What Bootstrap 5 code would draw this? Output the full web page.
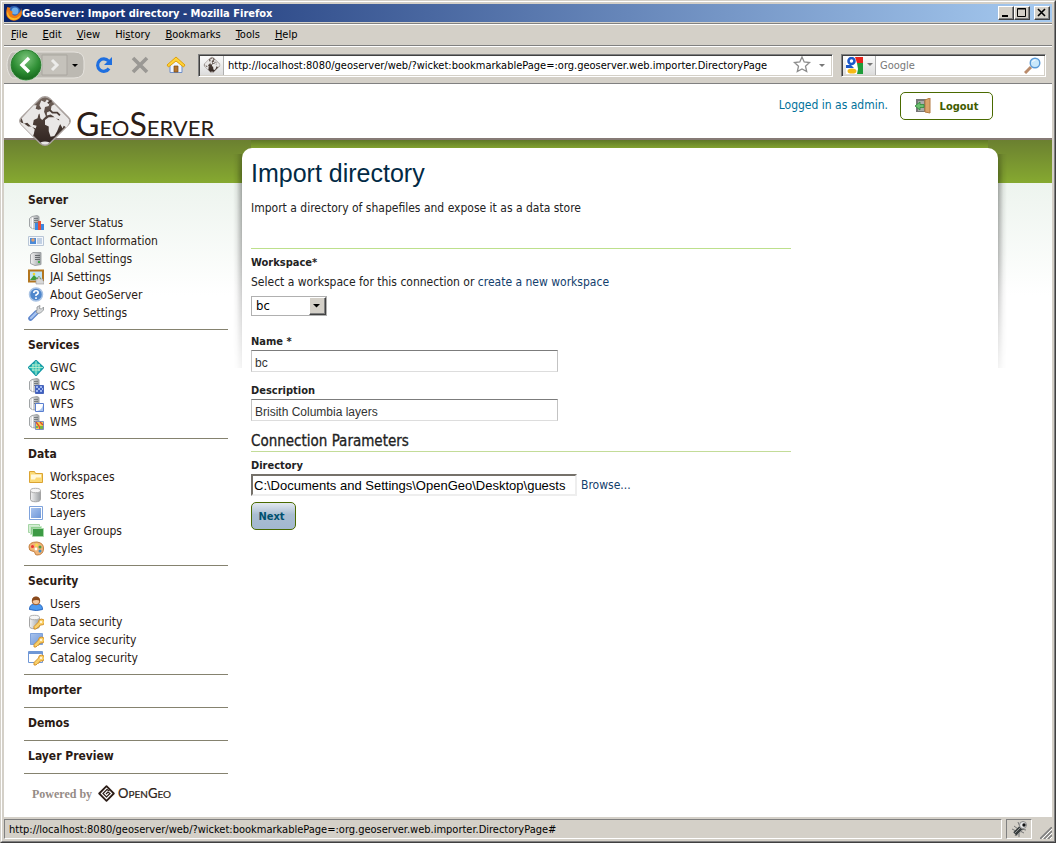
<!DOCTYPE html>
<html lang="en">
<head>
<meta charset="utf-8">
<meta name="viewport" content="width=device-width, initial-scale=1">
<title>GeoServer: Import directory</title>
<link rel="stylesheet" href="https://cdn.jsdelivr.net/npm/bootstrap@5.3.0/dist/css/bootstrap.min.css">
<style>
:root{--face:#d4d0c8;--ui:"DejaVu Sans Condensed","DejaVu Sans",sans-serif}
body{font:12px/18px var(--ui);color:#222;background:var(--face)}
a{text-decoration:none}
.win{border:1px solid;border-color:#d4d0c8 #404040 #404040 #d4d0c8}
.win-inner{border:1px solid;border-color:#fff #808080 #808080 #fff;padding:2px 2px 1px 2px}
.titlebar{height:18px;background:linear-gradient(90deg,#0a246a,#a6caf0);color:#fff;font-weight:bold;font-size:11px;padding:0 2px}
.winbtn{width:16px;height:14px;background:var(--face);border:1px solid;border-color:#fff #404040 #404040 #fff;box-shadow:inset -1px -1px #808080}
.groove{border-bottom:1px solid #808080;box-shadow:0 1px #fff}
.title-rule{padding-top:1px}
.menus{height:22px;font-size:11px;gap:15px;padding:1px 7px 0}
.menus a,.menus a:hover{color:#000}
.toolbar{height:37px;margin-top:1px;padding:0 6px 0 2px;border-bottom:1px solid #808080}
.tool{width:36px;height:30px}
.inset{height:23px;background:#fff;border:1px solid;border-color:#808080 #fff #fff #808080;box-shadow:inset 1px 1px #404040,inset -1px -1px #d4d0c8}
.inset input{font-size:11px;outline:0;min-width:0;height:21px}
.inset .cap{height:19px;margin:1px 0 0 1px;background:linear-gradient(#fbfbfb,#dcdcdc);border-right:1px solid #b0b0b0}
.inset .cap.engine{width:33px}
.inset .cap.favicon{width:24px}
.search{width:205px}
.search input::placeholder{color:#777}
.site{background:#fff}
.site-head{height:54px;padding:0 59px 0 13px}
.brandmark{position:relative;z-index:1;color:#2c1d17}
.wordmark{font:400 22px/32px Lato,sans-serif;color:#2c1d17;margin-left:3px}
.wordmark b{font-size:32px;font-weight:400}
.who{color:#00719a}
.logout{height:28px;width:93px;border:1px solid #4a6a00;border-radius:5px;background:#fff;color:#3f5c00;font:bold 11px var(--ui)}
.site-main{border-top:2px solid #867a75;background:linear-gradient(#6b8030,#86a930) 0 0/100% 43px no-repeat,linear-gradient(#edf4ee,#fff) 0 43px/100% 112px no-repeat}
.side{width:238px;padding:45px 14px 0 20px;color:#2a1a14}
.side section{border-bottom:1px solid #85826f;padding:5px 4px 7px}
.side h2{font-size:12px;line-height:20px;font-weight:bold;margin:0}
.side ul{padding-top:4px}
.side a,.side a:hover{color:#2a1a14;height:18px;gap:6px}
.powered{font:bold 12px/20px "Liberation Serif",serif;color:#958b86;padding:9px 8px 0}
.powered svg{margin:0 3px 0 6px}
.powered .og{font:400 10px/20px Lato,sans-serif;color:#2c1d17;-webkit-text-stroke:.2px}
.powered .og b{font-size:13px;font-weight:400}
.panel{position:relative;background:#fff;border-radius:10px 10px 0 0;margin:8px 54px 0 0;padding:10px 9px}
.panel::before{content:"";position:absolute;top:6px;left:-9px;right:-9px;height:214px;pointer-events:none;background:linear-gradient(270deg,#0005,#0001 60%,#0000) 0 0/9px 100% no-repeat,linear-gradient(90deg,#0005,#0001 60%,#0000) 100% 0/9px 100% no-repeat;-webkit-mask:linear-gradient(#0008,#000 20px,#000c 100px,#0002);mask:linear-gradient(#0008,#000 20px,#000c 100px,#0002)}
.panel::after{content:"";position:absolute;top:-8px;left:9px;right:10px;height:8px;background:linear-gradient(#5f7727,#82a22f)}
.panel h1{font:25px/30px "Liberation Sans",sans-serif;color:#022a45;margin:0 0 11px}
.form-area{max-width:540px;margin-top:31px}
.form-area.top-rule{border-top:1px solid #bde08c;padding-top:4px}
.form-area label{font-size:11px;line-height:16px;padding-top:2px;font-weight:bold;display:block}
.form-area a{color:#12406c}
.pick{width:76px;height:20px;margin:6px 0 16px}
.pick select{appearance:none;border:1px solid #b0b0b0;background:#fff;padding:0 4px;font-size:13px;color:#000;border-radius:0}
.pick span{position:absolute;right:1px;top:1px;pointer-events:none;width:17px;height:18px;background:var(--face);border:1px solid;border-color:#fff #404040 #404040 #fff;box-shadow:inset -1px -1px #808080}
.field{width:307px;height:22px;border:1px solid;border-color:#7c7c7c #c3c3c3 #ddd #c3c3c3;padding:4px 3px 0;font:12px "Liberation Sans",sans-serif;color:#333}
.field.spaced{margin-bottom:9px}
.form-area h3{font-size:15px;line-height:19px;font-weight:500;-webkit-text-stroke:.3px;margin:11px 0 4px;border-bottom:1px solid #c3dc98;color:#222}
.dir{width:326px;height:22px;border:2px solid;border-color:#75716a #eee #eee #75716a;padding:0 1px;font:13px "Liberation Sans",sans-serif;color:#000}
.next{width:45px;height:28px;margin-top:6px;border:1px solid #4a6a00;border-radius:5px;background:linear-gradient(#e2e8f0,#a9bdd1 45%,#a3b8cf);color:#00506f;font:bold 11px var(--ui);padding:0 4px 0 0}
.statusbar{height:23px;padding:2px 0 1px;font-size:11px;color:#000}
.cell{border:1px solid;border-color:#808080 #fff #fff #808080;height:20px}
.bug{width:26px}
</style>
</head>
<body>
<svg width="0" height="0" class="position-absolute" aria-hidden="true">
<defs>
<linearGradient id="gs" x1="0" x2="1"><stop offset="0" stop-color="#f4f4f4"/><stop offset="1" stop-color="#9b9fa2"/></linearGradient>
<linearGradient id="gb" x1="0" x2="1" y2="1"><stop offset="0" stop-color="#a9c4ee"/><stop offset="1" stop-color="#6d96d8"/></linearGradient>
<linearGradient id="gd" x1="0" y1="0" x2="0" y2="1"><stop offset="0" stop-color="#75675f"/><stop offset=".5" stop-color="#4a3c36"/><stop offset="1" stop-color="#2f231f"/></linearGradient>
<radialGradient id="gg" cx=".5" cy=".3" r=".7"><stop offset="0" stop-color="#7cc47c"/><stop offset=".6" stop-color="#2f8f35"/><stop offset="1" stop-color="#14641a"/></radialGradient>
<symbol id="srv" viewBox="0 0 16 16"><path d="M1.500 3.500 4 1.500l5-1 2 1v11l-4 1.500-3-.5-2.500-2z" fill="url(#gs)" stroke="#a0a4a6"/><path d="M6 3.500h4M6 5.500h4M6 7.500h4" stroke="#777d80"/><path d="M4.500 2.500v11" stroke="#fff"/></symbol>
<symbol id="key" viewBox="0 0 16 16"><path d="M6 12.500 10.500 8a3 3 0 1 1 2.500 3l-1.500.5-.5 1.500-1.500.5L8 15H6z" fill="#f8cf6a" stroke="#d08a20" stroke-width=".9"/><circle cx="13" cy="8" r="1" fill="#fff"/></symbol>
<symbol id="cyl" viewBox="0 0 16 16"><path d="M2.500 3.500v9c0 3 10 3 10 0v-9" fill="url(#gs)" stroke="#a4a4a4"/><ellipse cx="7.500" cy="3.500" rx="5" ry="2.200" fill="#f6f6f6" stroke="#b0b0b0"/></symbol>
<symbol id="globe" viewBox="0 0 60 60"><path d="M30 4q3 0 5 2l20 20q4 4 0 8L35 54q-5 4-10 0L5 34q-4-4 0-8L25 6q2-2 5-2z" fill="url(#gd)" stroke="#aaa29e" stroke-width="1.500"/><g fill="#e9e7e6"><path d="M5 27 18 13l3 0-1 4 3 1 4-1 0 3-4 3-1 4-4 2-1 5 4 1-1 3-5-2-4-4-4 1z"/><path d="m3 31 5 2 4 3 4 0 3 3-1 5-1 2L5 34z"/><path d="m26 8 4 2 2-3 3 2-1 5-4 1-1 5 2 5-4 4-2-2-1-6 2-4-2-4z"/><path d="m30 29 4-3 7 0 3 3 4 1-3 6-2 5-3 5-4 1-2-6 0-5-4-2z"/><path d="m32 21 4-2 1-5 3-2 2 2 5 5 8 8q2 2 1 5l-3 5-3-2-1 3-3-5-1-5-4-1-2-2-3-2-4 1z"/><path d="M25 53q5-2 10 0-5 5-10 0z"/></g><path d="m35 18 3 3 5 0 3 3M33 11l4-3" stroke="#4a3c36" stroke-width="2" fill="none"/></symbol>
</defs>
</svg>

<div class="win min-vh-100 d-flex flex-column">
<div class="win-inner flex-grow-1 d-flex flex-column">
 <div class="titlebar d-flex align-items-center">
  <svg width="16" height="16" viewBox="0 0 16 16"><circle cx="8" cy="8" r="7" fill="#2f62b5"/><circle cx="9" cy="6" r="3.500" fill="#72b0e8"/><path d="M1 3q-2 7 1 10 4 4 9 2 5-2 5-8l-1-4q0 4-2 5-3 4-6 2-2-2 0-3L3.500 5l1-2-3-1z" fill="#f07a13"/><path d="M2 6q0 6 5 7 5 1 8-4-2 6-8 6-5-1-6-6z" fill="#fbc02a"/></svg>
  <span class="flex-grow-1 lh-1 ms-0">GeoServer: Import directory - Mozilla Firefox</span>
  <button class="winbtn p-0 d-flex" aria-label="Minimize"><svg width="14" height="12"><path d="M3 8h6v2H3z"/></svg></button>
  <button class="winbtn p-0 d-flex" aria-label="Maximize"><svg width="14" height="12"><path d="M2.500 2v7.500h8V1.500h-8M2 2h9" fill="none" stroke="#000"/></svg></button>
  <button class="winbtn p-0 d-flex ms-1" aria-label="Close"><svg width="14" height="12"><path d="m3 2 7 7m0-7-7 7" stroke="#000" stroke-width="1.600"/></svg></button>
 </div>
 <div class="groove title-rule"></div>
 <nav class="menus groove d-flex align-items-center" aria-label="Menu bar">
  <a href="#"><u>F</u>ile</a><a href="#"><u>E</u>dit</a><a href="#"><u>V</u>iew</a><a href="#">Hi<u>s</u>tory</a><a href="#"><u>B</u>ookmarks</a><a href="#"><u>T</u>ools</a><a href="#"><u>H</u>elp</a>
 </nav>
 <div class="toolbar d-flex align-items-center">
  <svg width="80" height="34" viewBox="0 0 80 34" role="img" aria-label="Back and forward"><path d="M6 4h62q10 0 10 9v8q0 9-10 9H6q-5-5-5-13T6 4z" fill="#bcb9b2" stroke="#e6e3de"/><path d="M36 7h25v20H36z" fill="#c5c2bb" stroke="#a9a69f"/><path d="m46 12 5 5-5 5" fill="none" stroke="#ececea" stroke-width="3"/><circle cx="20" cy="17" r="15.500" fill="url(#gg)" stroke="#dff0df"/><circle cx="20" cy="17" r="15" fill="none" stroke="#2c7d30"/><path d="m23 10-7 7 7 7" fill="none" stroke="#fff" stroke-width="3.500"/><path d="M66 16h6l-3 3z"/></svg>
  <button class="tool btn p-0 border-0 d-flex align-items-center justify-content-center" aria-label="Reload"><svg width="18" height="18" viewBox="0 0 18 18"><path d="M14 12.500A6.200 6.200 0 1 1 13.500 5" fill="none" stroke="#1f6fe0" stroke-width="3.200"/><path d="M17 1v8H9z" fill="#1f6fe0"/></svg></button>
  <button class="tool btn p-0 border-0 d-flex align-items-center justify-content-center" aria-label="Stop"><svg width="18" height="18"><path d="m2 2 14 14M16 2 2 16" stroke="#9a9894" stroke-width="3.600"/></svg></button>
  <button class="tool btn p-0 border-0 d-flex align-items-center justify-content-center" aria-label="Home"><svg width="20" height="18" viewBox="0 0 20 18"><path d="M4 9v7.500h12V9l-6-5z" fill="#eef4ff" stroke="#6f8fc8"/><path d="M8 10h4v6H8z" fill="#b5742b" stroke="#7c4a12" stroke-width=".7"/><path d="m10 1 9 8-1.500 2L10 5l-7.500 6L1 9z" fill="#ffd338" stroke="#e0a00c"/></svg></button>
  <div class="inset d-flex flex-grow-1 ms-1 me-2 align-items-start">
   <span class="cap favicon d-flex align-items-center justify-content-center"><svg width="18" height="18"><use href="#globe"/></svg></span>
   <input class="border-0 flex-grow-1 bg-transparent p-0 ps-1" type="text" aria-label="Address" value="http://localhost:8080/geoserver/web/?wicket:bookmarkablePage=:org.geoserver.web.importer.DirectoryPage">
   <svg class="me-1 align-self-center" width="37" height="18" viewBox="0 0 37 18"><path d="m11 1 2.200 5 5.300.6-4 3.600 1.200 5.300L11 13l-4.700 2.500 1.200-5.300-4-3.600L8.800 6z" fill="#fff" stroke="#8d8d8d" stroke-width="1.300"/><path d="M28 8h6l-3 3z" fill="#777"/></svg>
  </div>
  <div class="inset search d-flex align-items-start">
   <span class="cap engine d-flex align-items-center justify-content-center gap-1"><svg width="17" height="17" viewBox="0 0 17 17"><path d="M0 0h17v17H0z" fill="#fff"/><path d="M9 0h8v6h-6z" fill="#e8231c"/><path d="M11 6h6v11h-6l1-5z" fill="#1f9c3a"/><circle cx="5.500" cy="4" r="3" fill="#fff" stroke="#1c58c8" stroke-width="2.600"/><path d="M0 8h5l3 3H0z" fill="#1c58c8"/><ellipse cx="6" cy="14" rx="4.500" ry="2.600" fill="#f5b916"/></svg><svg width="6" height="4"><path d="M0 0h6L3 3z" fill="#777"/></svg></span>
   <input class="border-0 flex-grow-1 bg-transparent p-0 ps-1" type="search" aria-label="Search" placeholder="Google">
   <svg class="me-1 align-self-center" width="17" height="17" viewBox="0 0 17 17"><path d="m1 16 6-6" stroke="#b98a6a" stroke-width="3"/><circle cx="11" cy="6" r="4.800" fill="#c9e8fb" stroke="#5b9bd8" stroke-width="1.400"/><path d="M8.500 5a3 3 0 0 1 3-2" stroke="#fff" fill="none"/></svg>
  </div>
 </div>

 <div class="site flex-grow-1 d-flex flex-column">
  <header class="site-head d-flex">
   <a class="brandmark d-flex align-items-start" href="#"><svg class="mt-2 flex-shrink-0" width="56" height="58" viewBox="0 0 60 60"><use href="#globe"/></svg><span class="wordmark mt-4"><b>G</b>EO<b>S</b>ERVER</span></a>
   <div class="ms-auto d-flex align-items-start gap-2 pt-1">
    <span class="who me-1 mt-2">Logged in as admin.</span>
    <button class="logout d-flex align-items-center justify-content-center gap-2 p-0 my-1"><svg width="17" height="16" viewBox="0 0 17 16"><path d="M1 1h10v13H1z" fill="#777"/><path d="M3 3h6v10H3z" fill="#aaa"/><path d="m10 2 5-2v15l-5-1z" fill="#d9a36a" stroke="#b37b43"/><path d="m0 8 5-4v2.500h4v3H5V12z" fill="#6cc070" stroke="#2f8a3a" stroke-width=".8"/></svg>Logout</button>
   </div>
  </header>
  <div class="site-main flex-grow-1 d-flex align-items-start">
   <nav class="side flex-shrink-0" aria-label="Site">
    <section><h2>Server</h2><ul class="list-unstyled mb-0">
     <li><a class="d-flex align-items-center" href="#"><svg width="16" height="16"><use href="#srv"/><path d="M7 8h3v7H7z" fill="#3f87e0"/><path d="M10 6h3v9h-3z" fill="#e8503a"/><path d="M13 9h3v6h-3z" fill="#3f87e0"/></svg>Server Status</a></li>
     <li><a class="d-flex align-items-center" href="#"><svg width="16" height="16"><path d="M.5 3.500h15v9H.5z" fill="#f4f8fc" stroke="#b9c6d6"/><path d="M2 5h6v6H2z" fill="#4a8ad8"/><circle cx="5" cy="7" r="1.700" fill="#e0a070"/><path d="M9 6h5M9 8h5M9 10h5" stroke="#8fa9cc"/></svg>Contact Information</a></li>
     <li><a class="d-flex align-items-center" href="#"><svg width="16" height="16"><path d="M2.500 3.500 5 1.500h8v12l-6 1-4.500-2z" fill="url(#gs)" stroke="#a0a4a6"/><path d="M7 4.500h5M7 6.500h5M7 8.500h5" stroke="#666b6e"/><path d="M10 10h2v2h-2z" fill="#3fae49"/></svg>Global Settings</a></li>
     <li><a class="d-flex align-items-center" href="#"><svg width="16" height="16"><path d="M1 1.500h14v11H1z" fill="#bfe3f6" stroke="#b3761f" stroke-width="2"/><path d="m2 11 4-5 3 3 2-2 3 4z" fill="#3e9e3a"/><circle cx="6" cy="5" r="1.300" fill="#f5d530"/><path d="M8 10h2V8h2v2h3v2h1v3H8z" fill="#d8d8d8" stroke="#999" stroke-width=".6"/></svg>JAI Settings</a></li>
     <li><a class="d-flex align-items-center" href="#"><svg width="16" height="16"><circle cx="8" cy="7.500" r="6.500" fill="#4f87cc" stroke="#a9c3e4" stroke-width="1.500"/><path d="M5.800 6q0-2.200 2.200-2.200T10.200 6Q10 7 8 8v1M8 10.200V12" fill="none" stroke="#fff" stroke-width="1.600"/></svg>About GeoServer</a></li>
     <li><a class="d-flex align-items-center" href="#"><svg width="16" height="16"><path d="m2.500 13.500 6-6" stroke="#5d86cc" stroke-width="4.600" stroke-linecap="round"/><path d="m3 13 5-5" stroke="#a7c3ef" stroke-width="2.400" stroke-linecap="round"/><path d="m8 7 1-2 0-3 3-1.500-.5 3 2 .5 2-2V5l-3 3-2.500.5z" fill="#d6d8da" stroke="#8b8f92" stroke-width=".8"/></svg>Proxy Settings</a></li>
    </ul></section>
    <section><h2>Services</h2><ul class="list-unstyled mb-0">
     <li><a class="d-flex align-items-center" href="#"><svg width="16" height="16"><path d="m8 .5 7.500 7L8 15.500.5 7.500z" fill="#35c1b8" stroke="#159aa6" stroke-width="1.500" stroke-linejoin="round"/><path d="M8 1v14M1 7.500h14M5 4v7M11 4v7M4 5h8M4 10h8" stroke="#c7f2d0" stroke-width=".8"/></svg>GWC</a></li>
     <li><a class="d-flex align-items-center" href="#"><svg width="16" height="16"><use href="#srv"/><path d="M7.500 7.500h8v8h-8z" fill="#3f60c0" stroke="#4a66bb"/><path d="M8 8h2v2H8zM12 8h2v2h-2zM10 10h2v2h-2zM14 10h1v2h-1zM8 12h2v2H8zM12 12h2v2h-2z" fill="#9eb6ef"/></svg>WCS</a></li>
     <li><a class="d-flex align-items-center" href="#"><svg width="16" height="16"><use href="#srv"/><path d="M7.500 7.500h8v8h-8z" fill="#fff" stroke="#5a7fd0"/><path d="M9 15q5-1 6-6v6z" fill="#a9c4ee"/></svg>WFS</a></li>
     <li><a class="d-flex align-items-center" href="#"><svg width="16" height="16"><use href="#srv"/><path d="M7.500 7.500h8v8h-8z" fill="#f3cf4d" stroke="#7b8fc2"/><path d="m8 8 3 4 1 3M12 8l3 3" stroke="#dc4c33" stroke-width="1.400" fill="none"/><path d="M12 12h3v3h-3zM8 12h2v2H8z" fill="#79b547"/></svg>WMS</a></li>
    </ul></section>
    <section><h2>Data</h2><ul class="list-unstyled mb-0">
     <li><a class="d-flex align-items-center" href="#"><svg width="16" height="16"><path d="M1.500 2.500h5l1 2h7v9h-13z" fill="#fbd974" stroke="#dba432"/><path d="M3 5.500h10v3H8l-1 2H3z" fill="#fff8dc"/></svg>Workspaces</a></li>
     <li><a class="d-flex align-items-center" href="#"><svg width="16" height="16"><use href="#cyl"/></svg>Stores</a></li>
     <li><a class="d-flex align-items-center" href="#"><svg width="16" height="16"><path d="M1.500 1.500h13v13h-13z" fill="#fff" stroke="#7fa3dc"/><path d="M3 3h10v10H3z" fill="url(#gb)"/></svg>Layers</a></li>
     <li><a class="d-flex align-items-center" href="#"><svg width="16" height="16"><path d="M.5 1.500h11v8H.5z" fill="#d5efd5" stroke="#a5d5a5"/><path d="M2.500 3.500h11v8h-11z" fill="#8fcf8f" stroke="#c9eac9"/><path d="M4.500 5.500h11v8h-11z" fill="#3c9a44" stroke="#a7d8a9"/></svg>Layer Groups</a></li>
     <li><a class="d-flex align-items-center" href="#"><svg width="16" height="16"><path d="M1 6q0-5 8-5 7 1 6.500 7T9 14q-2 0-2-2t-3-2-3-4z" fill="#f0b478" stroke="#c47f3e"/><circle cx="4.500" cy="5.500" r="1.500" fill="#e33"/><circle cx="8.500" cy="4" r="1.500" fill="#f6e04a"/><circle cx="12" cy="6" r="1.500" fill="#4b9e4b"/><circle cx="12" cy="10" r="1.500" fill="#3c8bc9"/><circle cx="8" cy="8" r="1.400" fill="#fff"/></svg>Styles</a></li>
    </ul></section>
    <section><h2>Security</h2><ul class="list-unstyled mb-0">
     <li><a class="d-flex align-items-center" href="#"><svg width="16" height="16"><path d="M1.500 13.500q0-5 4-5h5q4 0 4 5-6 2-13 0z" fill="#4d9af0" stroke="#2a68c0"/><circle cx="8" cy="5" r="3.800" fill="#f4c79d" stroke="#9c5a28"/><path d="M4 5q0-4.500 4-4.500T12 5q-3-2-8 0z" fill="#8a4a1c"/></svg>Users</a></li>
     <li><a class="d-flex align-items-center" href="#"><svg width="16" height="16"><use href="#cyl" x="-1"/><use href="#key"/></svg>Data security</a></li>
     <li><a class="d-flex align-items-center" href="#"><svg width="16" height="16"><path d="M2.500 1.500h12v11h-12z" fill="url(#gb)" stroke="#7fa3dc"/><use href="#key"/></svg>Service security</a></li>
     <li><a class="d-flex align-items-center" href="#"><svg width="16" height="16"><path d="M.5 1.500h14v11H.5z" fill="#fff" stroke="#6f97d6"/><path d="M1 2h13v2H1z" fill="#6f97d6"/><use href="#key"/></svg>Catalog security</a></li>
    </ul></section>
    <section><h2><a href="#">Importer</a></h2></section>
    <section><h2><a href="#">Demos</a></h2></section>
    <section><h2><a href="#">Layer Preview</a></h2></section>
    <div class="powered d-flex align-items-center">Powered by<svg width="17" height="17" viewBox="0 0 17 17"><path d="m8.500 1.200 7.300 7.300-7.300 7.300-7.300-7.300z" fill="#fff" stroke="#2c1d17" stroke-width="1.800" stroke-linejoin="round"/><path d="M11.500 6 9 4.500 5 8.500l3.500 3.500 3.500-3.500-2-1.500-2 2" fill="none" stroke="#2c1d17" stroke-width="1.200"/></svg><span class="og"><b>O</b>PEN<b>G</b>EO</span></div>
   </nav>
   <main class="panel flex-grow-1 align-self-stretch">
    <h1>Import directory</h1>
    <p class="mb-0">Import a directory of shapefiles and expose it as a data store</p>
    <form class="form-area top-rule">
     <label for="ws">Workspace*</label>
     <div class="mt-1 lh-sm">Select a workspace for this connection or <a href="#">create a new workspace</a></div>
     <div class="pick position-relative"><select id="ws" class="w-100 h-100"><option>bc</option></select><span class="d-flex"><svg width="15" height="16"><path d="M3 6h7L6.500 9.500z"/></svg></span></div>
     <label for="nm">Name *</label>
     <input id="nm" class="field spaced d-block" type="text" value="bc">
     <label for="ds">Description</label>
     <input id="ds" class="field d-block" type="text" value="Brisith Columbia layers">
     <h3>Connection Parameters</h3>
     <label for="dr">Directory</label>
     <div class="d-flex align-items-center gap-1"><input id="dr" class="dir" type="text" value="C:\Documents and Settings\OpenGeo\Desktop\guests"><a href="#">Browse...</a></div>
     <button class="next" type="button">Next</button>
    </form>
   </main>
  </div>
 </div>

 <footer class="statusbar d-flex">
  <div class="cell flex-grow-1 px-1 d-flex align-items-center"><span class="lh-1">http://localhost:8080/geoserver/web/?wicket:bookmarkablePage=:org.geoserver.web.importer.DirectoryPage#</span></div>
  <div class="cell bug ms-1 d-flex align-items-center justify-content-center"><svg width="17" height="17" viewBox="0 0 17 17"><path d="M1 8l4 2M4 15l2-3M8 16l0-4M3 5l4 3M7 1l2 5M13 12l-4-2M15 9l-5-1" stroke="#777"/><path d="m4 13 6-6" stroke="#3a3f3f" stroke-width="5"/><path d="m4 12 5-5M6 14l5-5" stroke="#aaa" stroke-width=".8"/><circle cx="12" cy="4" r="3.500" fill="#e8e8e8" stroke="#888"/><circle cx="13" cy="4" r="1.700" fill="#111"/></svg></div>
  <svg class="align-self-end ms-2" width="12" height="12"><path d="M0 12 12 0M4 12 12 4M8 12l4-4" stroke="#808080" stroke-width="1.600"/><path d="M2 12 12 2M6 12l6-6M10 12l2-2" stroke="#fff"/></svg>
 </footer>
</div>
</div>
<script src="https://cdn.jsdelivr.net/npm/bootstrap@5.3.0/dist/js/bootstrap.bundle.min.js"></script>
</body>
</html>
